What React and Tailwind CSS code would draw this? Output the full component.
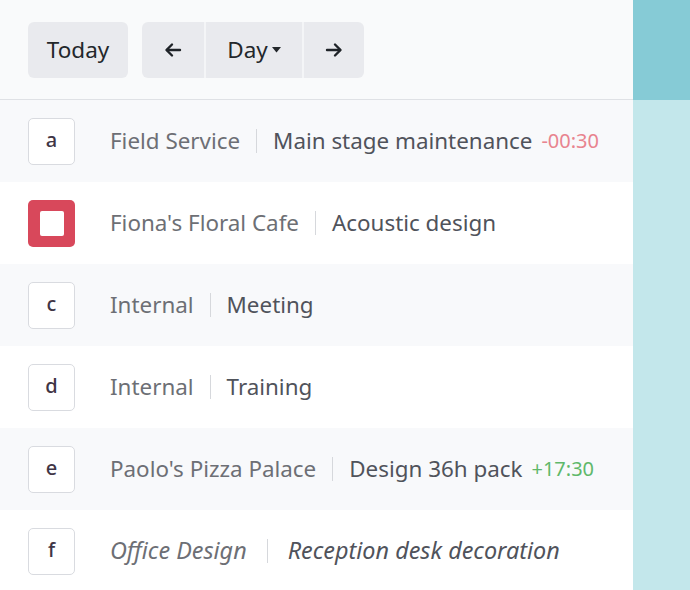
import React from "react";

const rows = [
  { key: "a", left: "Field Service", right: "Main stage maintenance", extra: "-00:30", extraColor: "text-[#e8848f]", bg: "bg-[#f8f9fb]" },
  { key: "checked", left: "Fiona's Floral Cafe", right: "Acoustic design", bg: "bg-white" },
  { key: "c", left: "Internal", right: "Meeting", bg: "bg-[#f8f9fb]" },
  { key: "d", left: "Internal", right: "Training", bg: "bg-white" },
  { key: "e", left: "Paolo's Pizza Palace", right: "Design 36h pack", extra: "+17:30", extraColor: "text-[#5fb86a]", bg: "bg-[#f8f9fb]" },
  { key: "f", left: "Office Design", right: "Reception desk decoration", italic: true, bg: "bg-white" },
];

function Arrow({ dir }) {
  return (
    <svg width="18" height="16" viewBox="0 0 18 16" fill="none" stroke="#1f2328" strokeWidth="2.4" strokeLinecap="round" strokeLinejoin="round">
      {dir === "left" ? (
        <>
          <path d="M16 8H3" />
          <path d="M8 2.5L2.5 8L8 13.5" />
        </>
      ) : (
        <>
          <path d="M2 8H15" />
          <path d="M10 2.5L15.5 8L10 13.5" />
        </>
      )}
    </svg>
  );
}

export default function App() {
  return (
    <div className="flex w-[690px] h-[590px] overflow-hidden" style={{ fontFamily: '"Noto Sans", "Open Sans", sans-serif' }}>
      <div className="w-[633px] flex flex-col">
        <div className="h-[100px] bg-[#f9fafb] border-b border-[#dfe1e5] flex items-center pl-[28px] gap-[14px] shrink-0">
          <div className="h-[56px] w-[100px] rounded-[6px] bg-[#e9eaee] flex items-center justify-center text-[22.5px] text-[#23272b]">Today</div>
          <div className="h-[56px] flex rounded-[6px] overflow-hidden bg-[#e9eaee]">
            <div className="w-[62px] flex items-center justify-center"><Arrow dir="left" /></div>
            <div className="w-[2px] bg-[#f4f5f7]" />
            <div className="w-[96px] flex items-center justify-center gap-[4px] text-[22.5px] text-[#23272b]">
              Day
              <svg width="9" height="6" viewBox="0 0 9 6"><path d="M0 0H9L4.5 5.5Z" fill="#23272b" /></svg>
            </div>
            <div className="w-[2px] bg-[#f4f5f7]" />
            <div className="w-[60px] flex items-center justify-center"><Arrow dir="right" /></div>
          </div>
        </div>
        {rows.map((r, i) => (
          <div key={i} className={`h-[82px] shrink-0 flex items-center pl-[28px] ${r.bg}`}>
            {r.key === "checked" ? (
              <div className="w-[47px] h-[47px] rounded-[5px] bg-[#d8485b] flex items-center justify-center">
                <div className="w-[24px] h-[25px] rounded-[2px] bg-white" />
              </div>
            ) : (
              <div className="w-[47px] h-[47px] rounded-[5px] border-[1.5px] border-[#d9dbe0] bg-white flex items-center justify-center text-[20px] font-medium text-[#3f3545] pb-[2px]">
                {r.key}
              </div>
            )}
            <div className={`ml-[35px] flex items-center whitespace-nowrap ${r.italic ? "italic text-[23.4px]" : "text-[22.4px]"}`}>
              <span className="text-[#6d6f75]">{r.left}</span>
              <span className={`${r.italic ? "mx-[20px]" : "mx-[16px]"} w-[1px] h-[24px] bg-[#d6d8dc]`} />
              <span className="text-[#50535b]">{r.right}</span>
              {r.extra && <span className={`ml-[9px] text-[20px] ${r.extraColor}`}>{r.extra}</span>}
            </div>
          </div>
        ))}
      </div>
      <div className="flex-1 flex flex-col">
        <div className="h-[100px] bg-[#86cbd6] shrink-0" />
        <div className="flex-1 bg-[#c3e7eb]" />
      </div>
    </div>
  );
}
